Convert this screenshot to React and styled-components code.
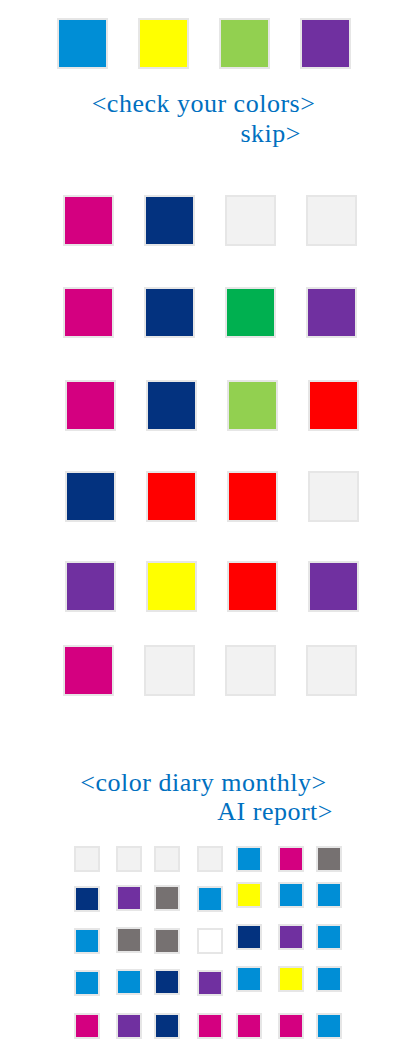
import React from "react";
import styled, { createGlobalStyle } from "styled-components";

const GlobalStyle = createGlobalStyle`
  html, body {
    margin: 0;
    padding: 0;
    background: #ffffff;
  }
  body {
    font-family: "Liberation Serif", "Times New Roman", serif;
  }
`;

const COLORS = {
  L: "#f2f2f2",
  W: "#ffffff",
  B: "#008ed6",
  Y: "#ffff00",
  E: "#92d050",
  P: "#7030a0",
  M: "#d40080",
  N: "#03327f",
  G: "#00b050",
  R: "#ff0000",
  S: "#767171",
};

const today = ["B", "Y", "E", "P"];

const weekly = [
  { cells: ["M", "N", "L", "L"], mt: 0, shift: 0 },
  { cells: ["M", "N", "G", "P"], mt: 41, shift: 0 },
  { cells: ["M", "N", "E", "R"], mt: 42, shift: 2 },
  { cells: ["N", "R", "R", "L"], mt: 40, shift: 2 },
  { cells: ["P", "Y", "R", "P"], mt: 39, shift: 2 },
  { cells: ["M", "L", "L", "L"], mt: 33, shift: 0 },
];

const monthly = [
  { cells: ["L", "L", "L", "L", "B", "M", "S"], nudge: [0, 0, 0, 0, 0, 0, 0], mt: 0 },
  { cells: ["N", "P", "S", "B", "Y", "B", "B"], nudge: [4, 3, 3, 4, 0, 0, 0], mt: 10 },
  { cells: ["B", "S", "S", "W", "N", "P", "B"], nudge: [4, 3, 4, 4, 0, 0, 0], mt: 12 },
  { cells: ["B", "B", "N", "P", "B", "Y", "B"], nudge: [4, 3, 3, 4, 0, 0, 0], mt: 12 },
  { cells: ["M", "P", "N", "M", "M", "M", "B"], nudge: [0, 0, 0, 0, 0, 0, 0], mt: 17 },
];

const Page = styled.main`
  width: 415px;
  padding-top: 18px;
  box-sizing: border-box;
`;

const TopRow = styled.div`
  display: flex;
  justify-content: flex-start;
  gap: 30px;
  padding-left: 57px;
`;

const Swatch = styled.div`
  box-sizing: border-box;
  width: ${({ $size }) => $size}px;
  height: ${({ $size }) => $size}px;
  border: 2px solid #e6e6e6;
  background: ${({ $color }) => $color};
`;

const Caption = styled.div`
  margin-top: ${({ $mt }) => $mt}px;
  color: #0070c0;
  font-family: "Liberation Serif", "Times New Roman", serif;
  font-size: 26px;
  letter-spacing: 0.5px;
  line-height: ${({ $lh }) => $lh}px;
  white-space: nowrap;
`;

const CaptionLine = styled.div`
  text-align: center;
  padding-right: 8px;
`;

const CaptionLink = styled.div`
  text-align: right;
  padding-right: ${({ $right }) => $right}px;
`;

const WeekGrid = styled.section`
  margin-top: 46px;
  display: flex;
  flex-direction: column;
`;

const WeekRow = styled.div`
  display: grid;
  grid-template-columns: repeat(4, 51px);
  column-gap: 30px;
  margin-top: ${({ $mt }) => $mt}px;
  padding-left: ${({ $shift }) => 63 + $shift}px;
`;

const MonthGrid = styled.section`
  margin-top: 20px;
  display: flex;
  flex-direction: column;
`;

const MonthRow = styled.div`
  display: grid;
  grid-template-columns: 42px 38px 43px 39px 42px 38px 26px;
  align-items: start;
  margin-top: ${({ $mt }) => $mt}px;
  padding-left: 74px;
`;

const MonthCell = styled(Swatch)`
  margin-top: ${({ $nudge }) => $nudge}px;
`;

export default function App() {
  return (
    <Page>
      <GlobalStyle />
      <TopRow>
        {today.map((c, i) => (
          <Swatch key={i} $size={51} $color={COLORS[c]} />
        ))}
      </TopRow>

      <Caption $mt={20} $lh={30}>
        <CaptionLine>&lt;check your colors&gt;</CaptionLine>
        <CaptionLink $right={114}>skip&gt;</CaptionLink>
      </Caption>

      <WeekGrid>
        {weekly.map((row, r) => (
          <WeekRow key={r} $mt={row.mt} $shift={row.shift}>
            {row.cells.map((c, i) => (
              <Swatch key={i} $size={51} $color={COLORS[c]} />
            ))}
          </WeekRow>
        ))}
      </WeekGrid>

      <Caption $mt={72} $lh={29}>
        <CaptionLine>&lt;color diary monthly&gt;</CaptionLine>
        <CaptionLink $right={82}>AI report&gt;</CaptionLink>
      </Caption>

      <MonthGrid>
        {monthly.map((row, r) => (
          <MonthRow key={r} $mt={row.mt}>
            {row.cells.map((c, i) => (
              <MonthCell key={i} $size={26} $nudge={row.nudge[i]} $color={COLORS[c]} />
            ))}
          </MonthRow>
        ))}
      </MonthGrid>
    </Page>
  );
}
